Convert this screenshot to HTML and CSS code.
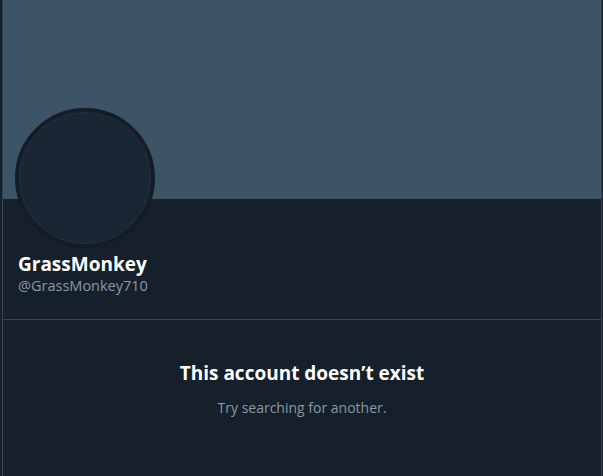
FILE: index.html
```html
<!DOCTYPE html>
<html lang="en">
<head>
    <meta charset="UTF-8">
    <meta name="viewport" content="width=device-width, initial-scale=1.0">
    <title>GrassMonkey</title>
    <link rel="stylesheet" href="styles.css">
</head>
<body>

    <main class="profile">
        <!-- Header photo (empty) -->
        <div class="banner"></div>

        <div class="profile-info">
            <div class="avatar"><div class="avatar-inner"></div></div>
            <h2 class="display-name">GrassMonkey</h2>
            <div class="handle">@GrassMonkey710</div>
        </div>

        <!-- Empty state -->
        <div class="empty">
            <h3>This account doesn’t exist</h3>
            <p>Try searching for another.</p>
        </div>
    </main>

</body>
</html>
```

FILE: styles.css
```css
body {
    margin: 0;
    padding: 0;
    background: #15202b;
    font-family: 'Open Sans', 'Noto Sans', sans-serif;
    color: #fff;
    overflow: hidden;
}

.profile {
    margin-left: 2px;
    width: 598px;
    min-height: 476px;
    border-left: 1px solid #38444d;
    border-right: 1px solid #38444d;
    background: #15202b;
}

.banner {
    height: 199px;
    background: #3d5466;
}

.profile-info {
    display: flow-root;
    padding: 0 15px 0 12px;
    height: 120px;
    border-bottom: 1px solid #38444d;
}

.avatar {
    width: 132px;
    height: 132px;
    margin-top: -91px;
    border: 4px solid #141d26;
    border-radius: 50%;
    background: #192734;
}

.avatar-inner {
    width: 130px;
    height: 130px;
    border: 1px solid #22303c;
    border-radius: 50%;
}

.display-name {
    margin: 4px 0 0 3px;
    font-size: 19px;
    font-weight: 700;
    line-height: 24px;
}

.handle {
    margin-left: 3px;
    font-size: 14.5px;
    line-height: 20px;
    color: #8899a6;
}

.empty {
    text-align: center;
    padding-top: 40px;
}

.empty h3 {
    margin: 0;
    font-size: 19px;
    font-weight: 700;
    line-height: 26px;
}

.empty p {
    margin: 12px 0 0;
    font-size: 14px;
    line-height: 20px;
    color: #8899a6;
}
```
